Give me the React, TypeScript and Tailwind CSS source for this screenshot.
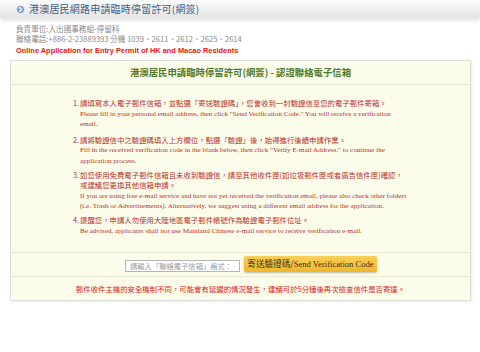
import React from 'react';

const CJK = { fontFamily: '"Noto Sans CJK TC", "Noto Sans", sans-serif' };
const SERIF = { fontFamily: '"Liberation Serif", "Noto Sans CJK TC", serif' };

interface Paso {
  num: string;
  zh: string[];
  en: string[];
}

const pasos: Paso[] = [
  {
    num: '1.',
    zh: ['請填寫本人電子郵件信箱，並點選「寄送驗證碼」，您會收到一封驗證信至您的電子郵件寄箱。'],
    en: [
      'Please fill in your personal email address, then click "Send Verification Code." You will receive a verification',
      'email.',
    ],
  },
  {
    num: '2.',
    zh: ['請將驗證信中之驗證碼填入上方欄位，點選「驗證」後，始得進行後續申請作業。'],
    en: [
      'Fill in the received verification code in the blank below, then click "Verify E-mail Address." to continue the',
      'application process.',
    ],
  },
  {
    num: '3.',
    zh: [
      '如您使用免費電子郵件信箱且未收到驗證信，請至其他收件匣(如垃圾郵件匣或者廣告信件匣)確認，',
      '或建議您更換其他信箱申請。',
    ],
    en: [
      'If you are using free e-mail service and have not yet received the verification email, please also check other folders',
      '(i.e. Trash or Advertisements). Alternatively, we suggest using a different email address for the application.',
    ],
  },
  {
    num: '4.',
    zh: ['提醒您，申請人勿使用大陸地區電子郵件帳號作為驗證電子郵件位址。'],
    en: ['Be advised, applicants shall not use Mainland Chinese e-mail service to receive verification e-mail.'],
  },
];

function IconFlecha() {
  return (
    <svg width="9" height="9" viewBox="0 0 10 10" aria-hidden="true">
      <circle cx="5" cy="5" r="4.6" fill="#7fa6cf" stroke="#ffffff" strokeWidth="0.8" />
      <path d="M4 2.8 L6.2 5 L4 7.2" fill="none" stroke="#ffffff" strokeWidth="1.3" strokeLinecap="round" strokeLinejoin="round" />
    </svg>
  );
}

export default function App() {
  return (
    <div className="relative h-[352px] w-[480px] overflow-hidden bg-white" style={CJK}>
      <header className="flex h-[18px] items-center gap-[4px] bg-gradient-to-b from-[#fdfdfd] to-[#e4e4e4] pl-[16px] shadow-[0_3px_4px_rgba(0,0,0,0.10)]">
        <IconFlecha />
        <h1 className="text-[10px] leading-none tracking-[0.2px] text-[#3b5f86]">港澳居民網路申請臨時停留許可(網簽)</h1>
      </header>

      <div className="mt-[6px] pl-[16px] text-[7.6px] leading-[10px] text-[#8a8a8a]">
        <p>負責單位:入出國事務組-停留科</p>
        <p>聯絡電話:+886-2-23889393 分機 1039、2611、2612、2625、2614</p>
      </div>
      <p
        className="mt-[2px] pl-[16px] text-[7.4px] font-bold leading-[10px] text-[#e8150f]"
        style={{ fontFamily: '"Liberation Sans", Arial, sans-serif' }}
      >
        Online Application for Entry Permit of HK and Macao Residents
      </p>

      <section className="ml-[10px] mt-[4px] w-[461px] border border-[#dedede] bg-[#fbfdea] shadow-[1px_1px_2px_rgba(0,0,0,0.08)]">
        <div className="flex h-[24px] items-center justify-center border-b border-[#e6e8d4]">
          <h2 className="text-[9.4px] font-bold text-[#4f7a2c]">港澳居民申請臨時停留許可(網簽) - 認證聯絡電子信箱</h2>
        </div>

        <ol className="border-b border-[#e6e8d4] pb-[16px] pl-[62px] pt-[13px] text-[#b8302c]">
          {pasos.map((p, i) => (
            <li key={p.num} className={`flex ${i === 0 ? '' : i === 1 ? 'mt-[5px]' : 'mt-[3.5px]'}`}>
              <span className="w-[7px] shrink-0 text-[7.4px] leading-[10.5px]">{p.num}</span>
              <div className="whitespace-nowrap">
                {p.zh.map((t) => (
                  <p key={t} className="text-[7.4px] leading-[10.5px]">{t}</p>
                ))}
                {p.en.map((t) => (
                  <p key={t} className="text-[7.1px] leading-[10.5px]" style={SERIF}>{t}</p>
                ))}
              </div>
            </li>
          ))}
        </ol>

        <div className="flex h-[24px] items-end gap-[4px] border-b border-[#e6e8d4] pb-[4px] pl-[114px]">
          <input
            readOnly
            placeholder="請輸入「聯絡電子信箱」格式："
            className="mb-0 h-[12px] w-[115px] border border-[#b5b5b5] bg-white px-[4px] text-[7.3px] text-[#999] placeholder:text-[#9a9a9a]"
          />
          <button className="h-[16px] w-[133px] rounded-[2px] bg-gradient-to-b from-[#f9cf59] to-[#f0b628] text-[8.6px] leading-none text-[#3d3116] shadow-[0_1px_2px_rgba(0,0,0,0.25)]">
            寄送驗證碼/<span style={SERIF}>Send Verification Code</span>
          </button>
        </div>

        <p className="flex h-[23px] items-center justify-center text-[7.4px] text-[#d8231c]">
          郵件收件主機的安全機制不同，可能會有延遲的情況發生，建議可於5分鐘後再次檢查信件是否寄達。
        </p>
      </section>
    </div>
  );
}
